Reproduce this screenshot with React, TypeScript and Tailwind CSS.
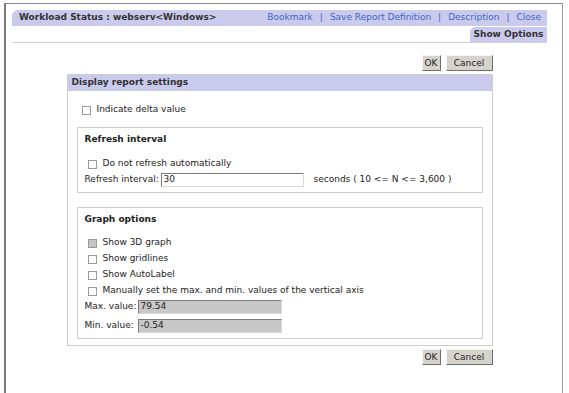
import React from 'react';

const LINKS = ['Bookmark', 'Save Report Definition', 'Description', 'Close'];

function Box({ disabled = false }: { disabled?: boolean }) {
  return (
    <span
      className={`inline-block h-[9px] w-[9px] shrink-0 border border-[#9a9a9a] ${
        disabled ? 'bg-[#c4c4c4]' : 'bg-white'
      }`}
    />
  );
}

function Check({ label, disabled = false }: { label: string; disabled?: boolean }) {
  return (
    <div className="flex h-[16px] items-center gap-[6px]">
      <Box disabled={disabled} />
      <span className="whitespace-nowrap">{label}</span>
    </div>
  );
}

function Buttons() {
  return (
    <div className="flex justify-end gap-[5px]">
      <button className="h-[16px] w-[19px] border border-t-[#f4f4f4] border-l-[#f4f4f4] border-r-[#6e6e6e] border-b-[#6e6e6e] bg-[#d6d3cc] text-[9px] leading-none">
        OK
      </button>
      <button className="h-[16px] w-[47px] border border-t-[#f4f4f4] border-l-[#f4f4f4] border-r-[#6e6e6e] border-b-[#6e6e6e] bg-[#d6d3cc] text-[9px] leading-none">
        Cancel
      </button>
    </div>
  );
}

function Field({ value, width, gray = false }: { value: string; width: string; gray?: boolean }) {
  return (
    <div
      className={`flex h-[14px] shrink-0 items-center border border-t-[#7a7a7a] border-l-[#7a7a7a] border-r-[#d8d8d8] border-b-[#d8d8d8] pl-[2px] ${width} ${
        gray ? 'bg-[#c8c8c8]' : 'bg-white'
      }`}
    >
      {value}
    </div>
  );
}

export default function App() {
  return (
    <div className="h-[393px] w-[569px] overflow-hidden bg-white font-['DejaVu_Sans',sans-serif] text-[9px] text-[#222]">
      <div className="ml-[4px] mt-[3px] h-[400px] w-[559px] border-l-2 border-r border-t border-l-[#7c7c7c] border-r-[#9c9c9c] border-t-[#8c8c8c] pl-[6px] pr-[15px] pt-[6px]">
        <div className="flex h-[16px] items-center justify-between rounded-tl-[6px] bg-[#cacaec] pl-[7px] pr-[6px]">
          <span className="font-bold text-[#333]">Workload Status : webserv&lt;Windows&gt;</span>
          <div className="flex items-center text-[#3b66c6]">
            {LINKS.map((l, i) => (
              <React.Fragment key={l}>
                {i > 0 && <span className="mx-[7px]">|</span>}
                <span>{l}</span>
              </React.Fragment>
            ))}
          </div>
        </div>
        <div className="mt-[1px] flex justify-end border-b border-[#cfcfe2]">
          <div className="flex h-[15px] w-[77px] items-center justify-center rounded-tl-[5px] bg-[#cacaec] font-bold text-[#333]">
            Show Options
          </div>
        </div>

        <div className="mx-auto mt-[12px] w-[426px]">
          <Buttons />
          <div className="mt-[3px] border border-[#cdcdcd]">
            <div className="flex h-[16px] items-center bg-[#cacaec] pl-[4px] font-bold text-[#333]">
              Display report settings
            </div>
            <div className="px-[9px] pb-[6px]">
              <div className="ml-[5px] mt-[11px]">
                <Check label="Indicate delta value" />
              </div>

              <div className="mt-[9px] border border-[#cdcdcd] px-[7px] pb-[4px] pt-[5px]">
                <div className="flex h-[14px] items-center font-bold">Refresh interval</div>
                <div className="ml-[3px] mt-[9px]">
                  <Check label="Do not refresh automatically" />
                </div>
                <div className="flex h-[16px] items-center">
                  <span className="w-[76px] shrink-0 whitespace-nowrap">Refresh interval:</span>
                  <Field value="30" width="w-[143px]" />
                  <span className="ml-[10px] whitespace-nowrap">seconds ( 10 &lt;= N &lt;= 3,600 )</span>
                </div>
              </div>

              <div className="mt-[14px] border border-[#cdcdcd] px-[7px] pb-[4px] pt-[5px]">
                <div className="flex h-[14px] items-center font-bold">Graph options</div>
                <div className="ml-[3px] mt-[8px]">
                  <Check label="Show 3D graph" disabled />
                  <Check label="Show gridlines" />
                  <Check label="Show AutoLabel" />
                  <Check label="Manually set the max. and min. values of the vertical axis" />
                </div>
                <div className="flex h-[16px] items-center">
                  <span className="w-[53px] shrink-0 whitespace-nowrap">Max. value:</span>
                  <Field value="79.54" width="w-[144px]" gray />
                </div>
                <div className="mt-[3px] flex h-[16px] items-center">
                  <span className="w-[53px] shrink-0 whitespace-nowrap">Min. value:</span>
                  <Field value="-0.54" width="w-[144px]" gray />
                </div>
              </div>
            </div>
          </div>
          <div className="mt-[3px]">
            <Buttons />
          </div>
        </div>
      </div>
    </div>
  );
}
